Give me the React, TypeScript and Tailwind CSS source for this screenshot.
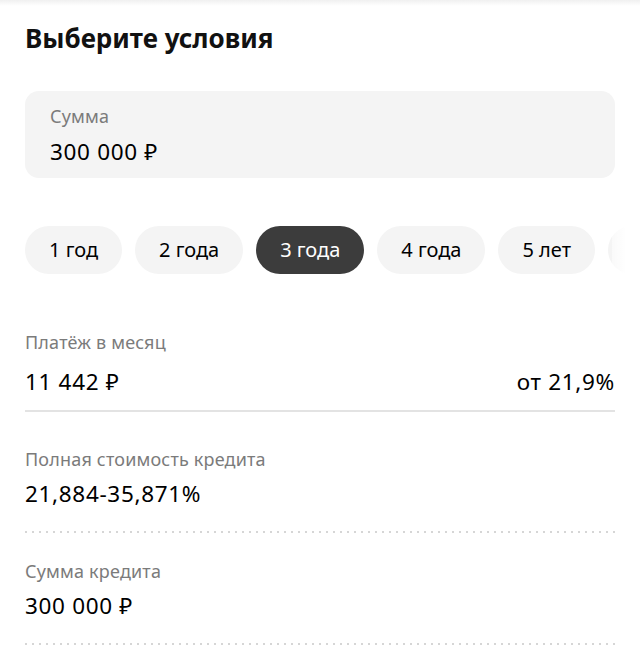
import { useState } from "react";

const terms = ["1 год", "2 года", "3 года", "4 года", "5 лет", "6 лет"];

type RowProps = {
    label: string;
    value: string;
    right?: string;
    dotted?: boolean;
    pt: string;
    gap: string;
    pb: string;
};

function Row({ label, value, right, dotted, pt, gap, pb }: RowProps) {
    return (
        <div className={pt}>
            <div className="text-[18px] leading-6 tracking-[0.01em] text-[#7b7b7b]">{label}</div>
            <div className={`${gap} ${pb} flex justify-between text-[22.5px] leading-[30px] tracking-[0.03em] text-black`}>
                <span>{value}</span>
                {right && <span>{right}</span>}
            </div>
            {dotted ? (
                <div className="h-[2px] bg-[linear-gradient(to_right,#d6d6d6_2px,transparent_2px)] bg-[length:7px_2px]" />
            ) : (
                <div className="h-[2px] bg-[#e3e3e3]" />
            )}
        </div>
    );
}

export default function App() {
    const [active, setActive] = useState(2);

    return (
        <div className="w-[640px] h-[650px] overflow-hidden bg-white font-['Noto_Sans',sans-serif]">
            <div className="h-[6px] bg-gradient-to-b from-[#f0f0f0] to-white" />
            <div className="px-[25px]">
                <h1 className="mt-[14px] text-[26px] leading-9 font-bold text-[#111]">Выберите условия</h1>

                {/* поле суммы */}
                <div className="mt-[35px] h-[87px] rounded-[14px] bg-[#f4f4f4] px-[25px] pt-[13px]">
                    <div className="text-[18px] leading-6 tracking-[0.01em] text-[#7b7b7b]">Сумма</div>
                    <div className="mt-[9px] text-[22.5px] leading-[30px] tracking-[0.03em] text-black">300 000 ₽</div>
                </div>

                {/* сроки */}
                <div className="relative mt-[48px] -mr-[25px]">
                    <div className="flex gap-[13px] overflow-hidden">
                        {terms.map((t, i) => (
                            <button
                                key={t}
                                onClick={() => setActive(i)}
                                className={`h-[48px] shrink-0 rounded-full px-[24px] text-[20px] ${i === active ? "bg-[#3c3c3c] text-white" : "bg-[#f4f4f4] text-black"}`}
                            >
                                {t}
                            </button>
                        ))}
                    </div>
                    <div className="pointer-events-none absolute right-0 top-0 h-[48px] w-[28px] bg-gradient-to-r from-white/50 via-white to-white" />
                </div>

                <div className="mt-[56px]">
                    <Row label="Платёж в месяц" value="11 442 ₽" right="от 21,9%" pt="pt-0" gap="mt-[13px]" pb="pb-[13px]" />
                    <Row label="Полная стоимость кредита" value="21,884-35,871%" dotted pt="pt-[35px]" gap="mt-[8px]" pb="pb-[22px]" />
                    <Row label="Сумма кредита" value="300 000 ₽" dotted pt="pt-[26px]" gap="mt-[8px]" pb="pb-[22px]" />
                </div>
            </div>
        </div>
    );
}
